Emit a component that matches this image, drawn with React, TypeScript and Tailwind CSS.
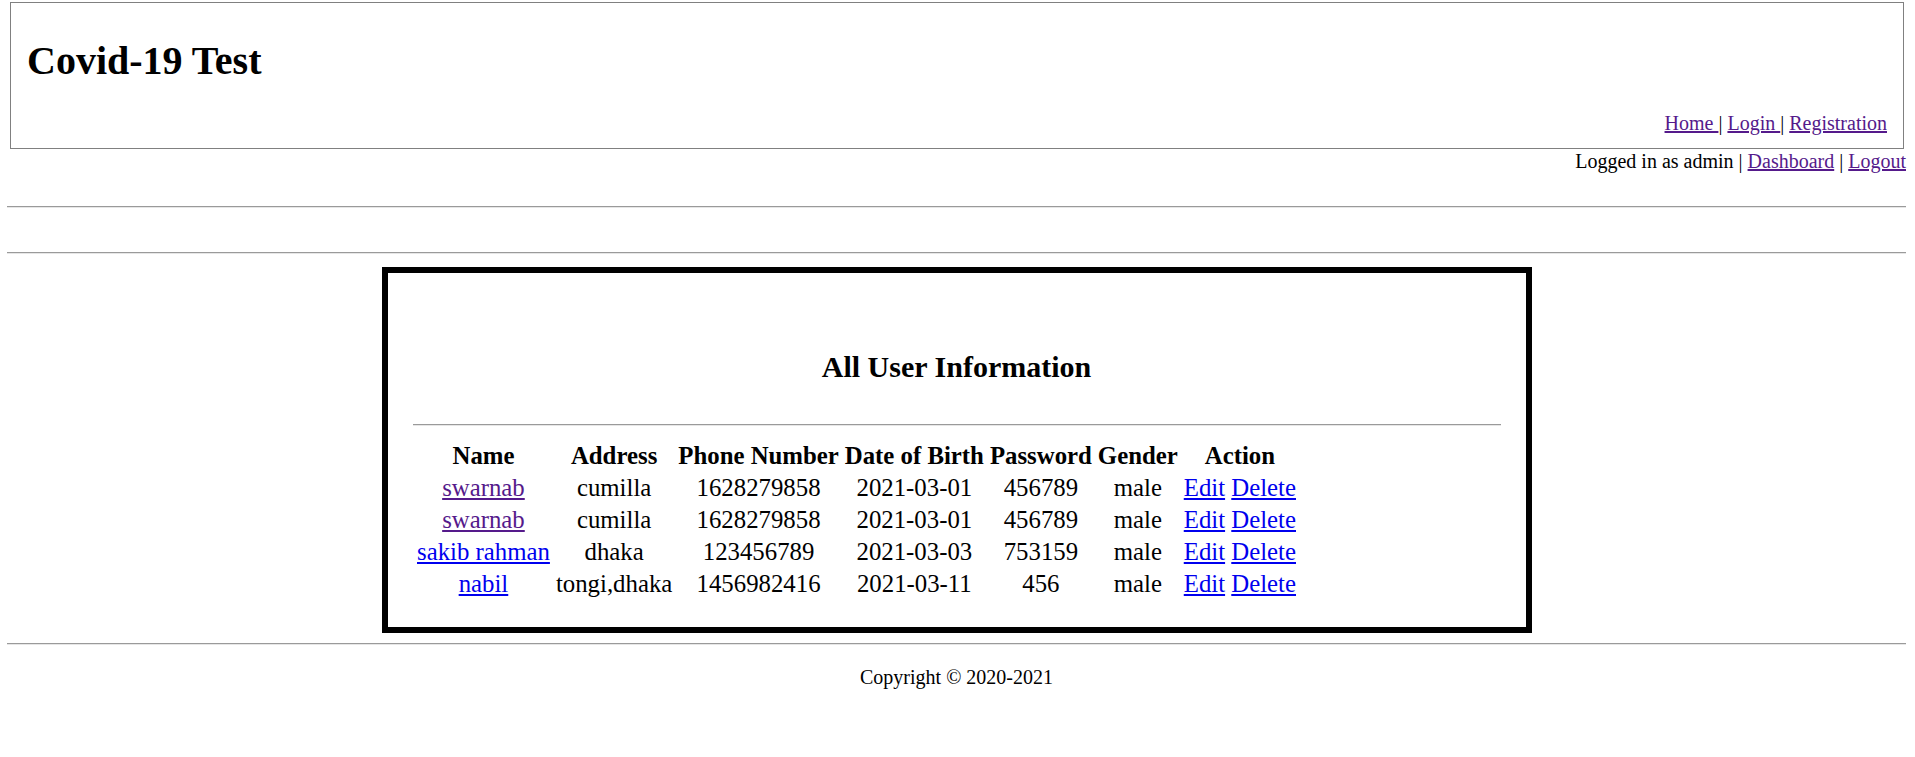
const users = [
  { name: "swarnab", visited: true, address: "cumilla", phone: "1628279858", dob: "2021-03-01", password: "456789", gender: "male" },
  { name: "swarnab", visited: true, address: "cumilla", phone: "1628279858", dob: "2021-03-01", password: "456789", gender: "male" },
  { name: "sakib rahman", visited: false, address: "dhaka", phone: "123456789", dob: "2021-03-03", password: "753159", gender: "male" },
  { name: "nabil", visited: false, address: "tongi,dhaka", phone: "1456982416", dob: "2021-03-11", password: "456", gender: "male" },
];

const columns = ["Name", "Address", "Phone Number", "Date of Birth", "Password", "Gender", "Action"];

function Rule() {
  return <div className="h-0 border-t border-t-[#9a9a9a] border-b border-b-[#e6e6e6]" />;
}

export default function App() {
  return (
    <div className="min-h-screen bg-white text-black font-['Liberation_Serif','Times_New_Roman',serif] text-[20px] leading-[23px] pl-[7px] pr-[9px] pt-[2px]">
      {/* header */}
      <header className="ml-[3px] mr-[2px] border border-[#808080] pl-[16px] pr-[16px] pt-[35px] pb-[13px]">
        <h1 className="text-[40px] leading-[46px] font-bold">Covid-19 Test</h1>
        <nav className="mt-[28px] text-right">
          <a href="#" className="underline text-[#551a8b]">Home </a>|{" "}
          <a href="#" className="underline text-[#551a8b]">Login </a>|{" "}
          <a href="#" className="underline text-[#551a8b]">Registration</a>
        </nav>
      </header>

      <div className="mt-[1px] text-right">
        Logged in as admin |{" "}
        <a href="#" className="underline text-[#551a8b]">Dashboard</a> |{" "}
        <a href="#" className="underline text-[#551a8b]">Logout</a>
      </div>

      <div className="mt-[33px]">
        <Rule />
      </div>
      <div className="mt-[44px]">
        <Rule />
      </div>

      {/* user table */}
      <div className="mt-[13px] mx-auto w-[1150px] border-[6px] border-black px-[25px] pt-[76px] pb-[26px]">
        <h2 className="text-center text-[30px] leading-[35px] font-bold">All User Information</h2>
        <div className="mt-[40px]">
          <Rule />
        </div>
        <table className="mt-[12px] border-separate border-spacing-[3px] text-[24.8px] leading-[27px]">
          <thead>
            <tr>
              {columns.map((c) => (
                <th key={c} className="px-[1.5px] py-[1px] font-bold text-center whitespace-nowrap">
                  {c}
                </th>
              ))}
            </tr>
          </thead>
          <tbody>
            {users.map((u, i) => (
              <tr key={i}>
                <td className="px-[1.5px] py-[1px] text-center whitespace-nowrap">
                  <a href="#" className={u.visited ? "underline text-[#551a8b]" : "underline text-[#0000ee]"}>
                    {u.name}
                  </a>
                </td>
                <td className="px-[1.5px] py-[1px] text-center whitespace-nowrap">{u.address}</td>
                <td className="px-[1.5px] py-[1px] text-center">{u.phone}</td>
                <td className="px-[1.5px] py-[1px] text-center">{u.dob}</td>
                <td className="px-[1.5px] py-[1px] text-center">{u.password}</td>
                <td className="px-[1.5px] py-[1px] text-center">{u.gender}</td>
                <td className="px-[1.5px] py-[1px] text-center whitespace-nowrap">
                  <a href="#" className="underline text-[#0000ee]">Edit</a>{" "}
                  <a href="#" className="underline text-[#0000ee]">Delete</a>
                </td>
              </tr>
            ))}
          </tbody>
        </table>
      </div>

      {/* footer */}
      <div className="mt-[10px]">
        <Rule />
      </div>
      <footer className="mt-[21px] text-center">Copyright © 2020-2021</footer>
    </div>
  );
}
